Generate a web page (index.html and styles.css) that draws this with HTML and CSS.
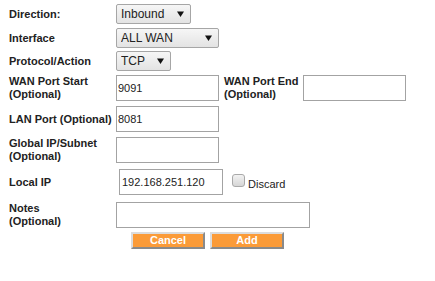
FILE: index.html
```html
<!DOCTYPE html>
<html lang="en">
<head>
    <meta charset="UTF-8">
    <title>Port Forwarding Rule</title>
    <link rel="stylesheet" href="styles.css">
</head>
<body>
    <form class="rule-form">
        <div class="row row-direction">
            <label class="label">Direction:</label>
            <select class="select select-direction">
                <option>Inbound</option>
                <option>Outbound</option>
            </select>
        </div>

        <div class="row row-interface">
            <label class="label">Interface</label>
            <select class="select select-interface">
                <option>ALL WAN</option>
            </select>
        </div>

        <div class="row row-protocol">
            <label class="label">Protocol/Action</label>
            <select class="select select-protocol">
                <option>TCP</option>
                <option>UDP</option>
            </select>
        </div>

        <div class="row row-wan">
            <label class="label">WAN Port Start<br>(Optional)</label>
            <input class="field" type="text" value="9091">
            <label class="label label-end">WAN Port End<br>(Optional)</label>
            <input class="field" type="text" value="">
        </div>

        <div class="row row-lan">
            <label class="label">LAN Port (Optional)</label>
            <input class="field" type="text" value="8081">
        </div>

        <div class="row row-global">
            <label class="label">Global IP/Subnet<br>(Optional)</label>
            <input class="field" type="text" value="">
        </div>

        <div class="row row-local">
            <label class="label label-local">Local IP</label>
            <input class="field field-local" type="text" value="192.168.251.120">
            <label class="discard">
                <input class="check" type="checkbox">
                <span>Discard</span>
            </label>
        </div>

        <div class="row row-notes">
            <label class="label">Notes<br>(Optional)</label>
            <input class="field field-notes" type="text" value="">
        </div>

        <div class="actions">
            <button type="button" class="btn">Cancel</button>
            <button type="button" class="btn">Add</button>
        </div>
    </form>
</body>
</html>
```

FILE: styles.css
```css
body {
    margin: 0;
    background-color: #ffffff;
    font-family: 'Liberation Sans', Arial, sans-serif;
    color: #222222;
}

.rule-form {
    padding: 4px 0 0 9px;
}

.row {
    display: flex;
    align-items: center;
}

.row-interface { margin-top: 4px; }
.row-protocol { margin-top: 3px; }
.row-wan { margin-top: 4px; }
.row-lan { margin-top: 5px; }
.row-global { margin-top: 5px; }
.row-local { margin-top: 6px; }
.row-notes { margin-top: 7px; }

.label {
    width: 107px;
    flex-shrink: 0;
    font-size: 11px;
    font-weight: bold;
    line-height: 13px;
    color: #222222;
}

.label-end {
    width: 79px;
    margin-left: 5px;
}

.label-local {
    width: 110px;
}

.select {
    -webkit-appearance: none;
    appearance: none;
    height: 20px;
    margin: 0;
    padding: 0 0 0 4px;
    border: 1px solid #a6a6a6;
    border-radius: 2px;
    font-family: 'Liberation Sans', Arial, sans-serif;
    font-size: 12px;
    color: #222222;
    background-color: #ededed;
    background-image:
        url("data:image/svg+xml;utf8,<svg xmlns='http://www.w3.org/2000/svg' width='7' height='6'><path d='M0 0.5h7L3.5 6z' fill='%23111'/></svg>"),
        linear-gradient(#f6f6f6, #e3e3e3);
    background-repeat: no-repeat, no-repeat;
    background-position: right 6px center, 0 0;
}

.select-direction { width: 75px; }
.select-interface { width: 103px; }
.select-protocol { width: 55px; }

.field {
    width: 103px;
    height: 26px;
    margin: 0;
    padding: 0 1px;
    box-sizing: border-box;
    border: 1px solid #a3a3a3;
    font-family: 'Liberation Sans', Arial, sans-serif;
    font-size: 11px;
    color: #222222;
    background-color: #ffffff;
    outline: none;
}

.field-local {
    width: 104px;
    padding-left: 2px;
}

.field-notes {
    width: 194px;
}

.discard {
    display: flex;
    align-items: center;
    margin-left: 9px;
    font-size: 11px;
    color: #222222;
}

.check {
    -webkit-appearance: none;
    appearance: none;
    width: 13px;
    height: 13px;
    margin: 0 3px 0 0;
    border: 1px solid #a9a9a9;
    border-radius: 3px;
    background: linear-gradient(#f2f2f2, #d6d6d6);
    position: relative;
    top: -2px;
}

.discard span {
    position: relative;
    top: 2px;
}

.actions {
    display: flex;
    gap: 5px;
    margin: 4px 0 0 122px;
}

.btn {
    width: 74px;
    height: 17px;
    padding: 0;
    border: 2px solid;
    border-color: #dcdcdc #8a8a8a #8a8a8a #dcdcdc;
    background-color: #fb9b38;
    color: #ffffff;
    font-family: 'Liberation Sans', Arial, sans-serif;
    font-size: 11px;
    font-weight: bold;
    line-height: 13px;
    cursor: pointer;
}
```
